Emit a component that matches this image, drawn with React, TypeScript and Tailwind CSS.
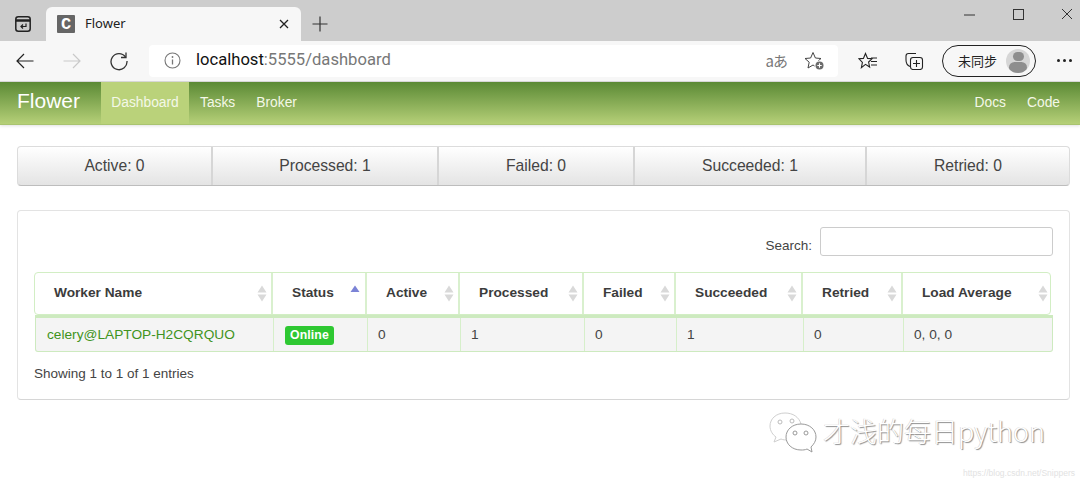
import React from "react";

const Sort = ({ active }: { active?: boolean }) =>
  active ? (
    <svg width="10" height="8" viewBox="0 0 10 8" className="absolute right-[5px] top-[12px]">
      <path d="M5 0.5 L9.5 7 H0.5 Z" fill="#7b83d6" />
    </svg>
  ) : (
    <svg width="10" height="17" viewBox="0 0 10 17" className="absolute right-[4px] top-[12px]">
      <path d="M5 0.5 L9.5 7.5 H0.5 Z M5 16.5 L9.5 9.5 H0.5 Z" fill="#d9d9d9" />
    </svg>
  );

const cols = "grid grid-cols-[238px_94px_93px_124px_92px_127px_100px_149px]";

const heads = [
  { t: "Worker Name" },
  { t: "Status", active: true },
  { t: "Active" },
  { t: "Processed" },
  { t: "Failed" },
  { t: "Succeeded" },
  { t: "Retried" },
  { t: "Load Average" },
];

const stats = [
  { t: "Active: 0", w: "w-[195px]" },
  { t: "Processed: 1", w: "w-[226px]" },
  { t: "Failed: 0", w: "w-[196px]" },
  { t: "Succeeded: 1", w: "w-[232px]" },
  { t: "Retried: 0", w: "flex-1" },
];

export default function App() {
  return (
    <div className="w-[1080px] h-[484px] overflow-hidden bg-white font-['Liberation_Sans',Arial,sans-serif] text-[#333]">
      {/* tab strip */}
      <div className="h-[41px] bg-[#cdcdcd] flex items-end relative">
        <div className="w-[46px] h-full flex items-center justify-center pt-[7px]">
          <svg width="16" height="16" viewBox="0 0 16 16" fill="none">
            <rect x="0.8" y="0.8" width="14.4" height="14.4" rx="2.5" stroke="#222" strokeWidth="1.5" />
            <path d="M1 4.5 H15" stroke="#222" strokeWidth="2.5" />
            <path d="M11 7.5 V10.5 H6 M8 8.5 L6 10.5 L8 12.5" stroke="#222" strokeWidth="1.2" />
          </svg>
        </div>
        <div className="w-[255px] h-[34px] bg-[#f7f7f7] rounded-t-[6px] flex items-center pl-[11px] pr-[12px]">
          <div className="w-[18px] h-[18px] bg-[#666] rounded-[1px] flex items-center justify-center">
            <span className="text-white font-bold text-[17px] leading-none font-['Liberation_Mono',monospace]">C</span>
          </div>
          <span className="ml-[10px] text-[13px] text-[#222] font-['Noto_Sans',sans-serif] flex-1">Flower</span>
          <svg width="10" height="10" viewBox="0 0 10 10">
            <path d="M1 1 L9 9 M9 1 L1 9" stroke="#222" strokeWidth="1.3" />
          </svg>
        </div>
        <div className="h-[34px] flex items-center pl-[11px]">
          <svg width="16" height="16" viewBox="0 0 16 16">
            <path d="M8 0.5 V15.5 M0.5 8 H15.5" stroke="#333" strokeWidth="1.2" />
          </svg>
        </div>
        <div className="absolute right-[7px] top-[8px] flex items-center">
          <svg width="11" height="11" viewBox="0 0 11 11">
            <path d="M0 6 H11" stroke="#333" strokeWidth="1" />
          </svg>
          <svg width="11" height="11" viewBox="0 0 11 11" fill="none" className="ml-[38px]">
            <rect x="0.5" y="0.5" width="10" height="10" stroke="#333" strokeWidth="1" />
          </svg>
          <svg width="12" height="12" viewBox="0 0 12 12" className="ml-[37px]">
            <path d="M1 1 L11 11 M11 1 L1 11" stroke="#333" strokeWidth="1" />
          </svg>
        </div>
      </div>

      {/* toolbar */}
      <div className="h-[41px] bg-[#f7f7f7] border-b border-[#dcdcdc] flex items-center pb-[1px]">
        <div className="w-[149px] flex items-center shrink-0">
          <svg width="18" height="16" viewBox="0 0 18 16" className="ml-[16px]" fill="none">
            <path d="M17.5 8 H1 M8 1 L1 8 L8 15" stroke="#222" strokeWidth="1.2" />
          </svg>
          <svg width="18" height="16" viewBox="0 0 18 16" className="ml-[29px]" fill="none">
            <path d="M0.5 8 H17 M10 1 L17 8 L10 15" stroke="#c9c9c9" strokeWidth="1.2" />
          </svg>
          <svg width="20" height="20" viewBox="0 0 20 20" className="ml-[28px]" fill="none">
            <path d="M16.5 6 A8 8 0 1 0 18 10" stroke="#333" strokeWidth="1.3" />
            <path d="M17 1.5 V6.5 H12" stroke="#333" strokeWidth="1.3" />
          </svg>
        </div>
        <div className="w-[689px] h-[32px] bg-white rounded-[4px] flex items-center pl-[15px] pr-[12px] shrink-0">
          <svg width="17" height="17" viewBox="0 0 17 17" fill="none">
            <circle cx="8.5" cy="8.5" r="7.5" stroke="#777" strokeWidth="1.1" />
            <path d="M8.5 7.5 V12.5" stroke="#777" strokeWidth="1.3" />
            <circle cx="8.5" cy="5" r="0.9" fill="#777" />
          </svg>
          <span className="ml-[15px] text-[16.6px] leading-none font-['Roboto',sans-serif] flex-1">
            <span className="text-[#111]">localhost</span>
            <span className="text-[#777]">:5555/dashboard</span>
          </span>
          <span className="text-[15px] text-[#777] font-['Noto_Sans_CJK_JP',sans-serif] leading-none tracking-[-1px]">aあ</span>
          <svg width="22" height="20" viewBox="0 0 22 20" className="ml-[17px]" fill="none">
            <path d="M9 1.5 L11.4 7 L17 7.5 L12.8 11.2 L14 17 L9 14 L4 17 L5.2 11.2 L1 7.5 L6.6 7 Z" stroke="#444" strokeWidth="1" />
            <circle cx="15.5" cy="14.5" r="5" fill="#fff" />
            <circle cx="15.5" cy="14.5" r="4" fill="#6b6b6b" />
            <path d="M15.5 12.3 V16.7 M13.3 14.5 H17.7" stroke="#fff" strokeWidth="1.1" />
          </svg>
        </div>
        <svg width="20" height="18" viewBox="0 0 20 18" className="ml-[20px]" fill="none">
          <path d="M7.5 1.5 L9.6 6.4 L14 6.8 L10.6 10 L11.6 15 L7.5 12.4 L3.4 15.6 L4.4 10.4 L1 6.8 L5.4 6.4 Z" stroke="#222" strokeWidth="1.1" />
          <path d="M13 6 H19 M13 9.5 H19 M13 13 H19" stroke="#222" strokeWidth="1" />
        </svg>
        <svg width="19" height="18" viewBox="0 0 19 18" className="ml-[27px]" fill="none">
          <path d="M5 14.5 C2.5 13.5 1 11 1 8 V4 C1 2.5 2 1.5 3.5 1.5 H11" stroke="#222" strokeWidth="1.1" />
          <rect x="5.5" y="5.5" width="12" height="12" rx="2.5" stroke="#222" strokeWidth="1.1" />
          <path d="M11.5 8 V15 M8 11.5 H15" stroke="#222" strokeWidth="1.1" />
        </svg>
        <div className="ml-[18px] w-[94px] h-[32px] rounded-full border border-[#222] flex items-center pl-[15px] shrink-0">
          <span className="text-[13px] text-[#222] font-['Noto_Sans_CJK_SC',sans-serif] leading-none">未同步</span>
          <div className="ml-[9px] w-[24px] h-[24px] rounded-full bg-[#d6d6d6] overflow-hidden flex flex-col items-center pt-[3px]">
            <div className="w-[11px] h-[11px] rounded-full bg-[#8e8e8e]" />
            <div className="w-[18px] h-[12px] rounded-full bg-[#8e8e8e] mt-[1px]" />
          </div>
        </div>
        <div className="ml-[21px] flex gap-[3px]">
          <div className="w-[3px] h-[3px] rounded-full bg-[#222]" />
          <div className="w-[3px] h-[3px] rounded-full bg-[#222]" />
          <div className="w-[3px] h-[3px] rounded-full bg-[#222]" />
        </div>
      </div>

      {/* navbar */}
      <div className="h-[43px] bg-gradient-to-b from-[#5b8a35] to-[#b6d078] border-b border-[#a9c470] shadow-[0_1px_3px_rgba(0,0,0,0.12)] flex items-stretch text-[13.8px] text-[#f4f8e8]">
        <span className="pl-[17px] w-[101px] text-[21px] text-white flex items-center pb-[4px]">Flower</span>
        <span className="w-[88px] bg-[#bad27a] flex items-center justify-center">Dashboard</span>
        <span className="ml-[11px] flex items-center">Tasks</span>
        <span className="ml-[21px] flex items-center">Broker</span>
        <span className="ml-auto flex items-center">Docs</span>
        <span className="ml-[21px] mr-[20px] flex items-center">Code</span>
      </div>

      {/* stats */}
      <div className="mx-[17px] mt-[21px] w-[1053px] h-[40px] flex rounded-[4px] border border-[#dcdcdc] border-b-[#bdbdbd] bg-gradient-to-b from-white to-[#e4e4e4] text-[15.7px] text-[#444] overflow-hidden">
        {stats.map((s, i) => (
          <div
            key={s.t}
            className={`${s.w} flex items-center justify-center ${i < 4 ? "border-r-2 border-[#d6d6d6]" : ""}`}
          >
            {s.t}
          </div>
        ))}
      </div>

      {/* panel */}
      <div className="mx-[17px] mt-[24px] w-[1053px] h-[190px] rounded-[4px] border border-[#e3e3e3] border-b-[#d6d6d6] bg-white px-[16px] pt-[16px] text-[13.7px] text-[#444]">
        <div className="flex items-center justify-end h-[29px]">
          <span className="text-[13.5px] mt-[9px]">Search:</span>
          <div className="ml-[8px] w-[233px] h-[29px] rounded-[3px] border border-[#ccc] bg-white" />
        </div>
        <div className={`${cols} mt-[16px] h-[43px] rounded-[4px] border border-[#d2eec4] font-bold w-[1017px] box-border text-[#3c3c3c]`}>
          {heads.map((h, i) => (
            <div
              key={h.t}
              className={`relative flex items-center pl-[19px] ${i < 7 ? "border-r-2 border-[#d9f0ce]" : ""}`}
            >
              {h.t}
              <Sort active={h.active} />
            </div>
          ))}
        </div>
        <div className={`${cols} ml-[1px] h-[37px] rounded-b-[3px] bg-[#f4f4f4] border-t-[3px] border-b border-x border-[#cdeabf] border-b-[#cdeabf] w-[1018px] box-border`}>
          <div className="flex items-center pl-[11px] pt-[1px] text-[#3f9320] border-r border-[#d6efca]">celery@LAPTOP-H2CQRQUO</div>
          <div className="flex items-center pl-[11px] pt-[1px] border-r border-[#d6efca]">
            <span className="px-[5px] h-[19px] rounded-[3px] bg-[#2ec832] text-white font-bold text-[12.3px] tracking-[0.1px] flex items-center">Online</span>
          </div>
          {["0", "1", "0", "1", "0", "0, 0, 0"].map((v, i) => (
            <div key={i} className={`flex items-center pl-[10px] pt-[1px] ${i < 5 ? "border-r border-[#d6efca]" : ""}`}>{v}</div>
          ))}
        </div>
        <div className="mt-[14px] text-[13.5px] leading-[16px]">Showing 1 to 1 of 1 entries</div>
      </div>

      {/* watermark */}
      <div className="relative h-[84px]">
        <div className="flex justify-end items-center pr-[35px] pt-[11px]">
          <svg width="50" height="44" viewBox="0 0 50 44" fill="none" className="mr-[5px]">
            <path d="M17 2 C8 2 2 8 2 15 C2 20 5 24 8 26 L6 31 L13 28 C15 29 18 29 20 29" stroke="#cfcfcf" strokeWidth="1" fill="#fff" />
            <path d="M17 2 C25 2 31 6 33 13" stroke="#cfcfcf" strokeWidth="1" />
            <path d="M33 13 C24 13 18 19 18 26 C18 33 24 39 33 39 C35 39 37 39 39 38 L44 41 L43 36 C46 33 48 30 48 26 C48 19 42 13 33 13 Z" stroke="#9a9a9a" strokeWidth="1" fill="#fff" />
            <circle cx="12" cy="11" r="2" stroke="#bbb" />
            <circle cx="24" cy="10" r="2" stroke="#bbb" />
            <circle cx="27" cy="22" r="2" stroke="#999" />
            <circle cx="38" cy="22" r="2" stroke="#999" />
          </svg>
          <span className="text-[27px] leading-none mb-[6px] text-white font-['Noto_Sans_CJK_SC','Noto_Sans',sans-serif] font-light [text-shadow:1px_1px_1px_#8a8a8a,-0.5px_-0.5px_0.5px_#ccc]">
            才浅的每日python
          </span>
        </div>
        <div className="absolute right-[5px] top-[69px] text-[8.5px] leading-none text-[#e2e2e2]">https://blog.csdn.net/Snippers</div>
      </div>
    </div>
  );
}
